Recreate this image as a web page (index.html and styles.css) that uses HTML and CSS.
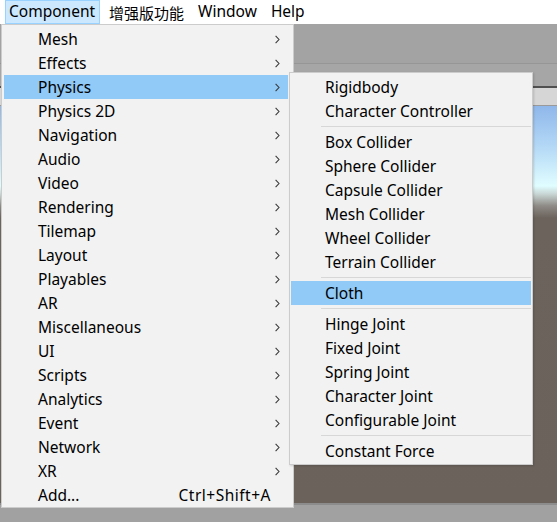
FILE: index.html
```html
<!DOCTYPE html>
<html>
<head>
<meta charset="utf-8">
<link rel="stylesheet" href="styles.css">
</head>
<body>
<div class="menubar">
  <div class="mb-item active">Component</div>
  <div class="mb-item cjk">增强版功能</div>
  <div class="mb-item">Window</div>
  <div class="mb-item">Help</div>
</div>
<div class="workspace">
  <div class="band-top"></div>
  <div class="band-mid"></div>
  <div class="scene-toolbar"></div>
  <div class="scene"></div>
  <div class="band-bottom"></div>

  <div class="menu main-menu">
    <div class="row"><span class="label">Mesh</span><svg class="chev" viewBox="0 0 5 9"><polyline points="0.6,0.8 4,4.5 0.6,8.2"/></svg></div>
    <div class="row"><span class="label">Effects</span><svg class="chev" viewBox="0 0 5 9"><polyline points="0.6,0.8 4,4.5 0.6,8.2"/></svg></div>
    <div class="row hl"><span class="label">Physics</span><svg class="chev" viewBox="0 0 5 9"><polyline points="0.6,0.8 4,4.5 0.6,8.2"/></svg></div>
    <div class="row"><span class="label">Physics 2D</span><svg class="chev" viewBox="0 0 5 9"><polyline points="0.6,0.8 4,4.5 0.6,8.2"/></svg></div>
    <div class="row"><span class="label">Navigation</span><svg class="chev" viewBox="0 0 5 9"><polyline points="0.6,0.8 4,4.5 0.6,8.2"/></svg></div>
    <div class="row"><span class="label">Audio</span><svg class="chev" viewBox="0 0 5 9"><polyline points="0.6,0.8 4,4.5 0.6,8.2"/></svg></div>
    <div class="row"><span class="label">Video</span><svg class="chev" viewBox="0 0 5 9"><polyline points="0.6,0.8 4,4.5 0.6,8.2"/></svg></div>
    <div class="row"><span class="label">Rendering</span><svg class="chev" viewBox="0 0 5 9"><polyline points="0.6,0.8 4,4.5 0.6,8.2"/></svg></div>
    <div class="row"><span class="label">Tilemap</span><svg class="chev" viewBox="0 0 5 9"><polyline points="0.6,0.8 4,4.5 0.6,8.2"/></svg></div>
    <div class="row"><span class="label">Layout</span><svg class="chev" viewBox="0 0 5 9"><polyline points="0.6,0.8 4,4.5 0.6,8.2"/></svg></div>
    <div class="row"><span class="label">Playables</span><svg class="chev" viewBox="0 0 5 9"><polyline points="0.6,0.8 4,4.5 0.6,8.2"/></svg></div>
    <div class="row"><span class="label">AR</span><svg class="chev" viewBox="0 0 5 9"><polyline points="0.6,0.8 4,4.5 0.6,8.2"/></svg></div>
    <div class="row"><span class="label">Miscellaneous</span><svg class="chev" viewBox="0 0 5 9"><polyline points="0.6,0.8 4,4.5 0.6,8.2"/></svg></div>
    <div class="row"><span class="label">UI</span><svg class="chev" viewBox="0 0 5 9"><polyline points="0.6,0.8 4,4.5 0.6,8.2"/></svg></div>
    <div class="row"><span class="label">Scripts</span><svg class="chev" viewBox="0 0 5 9"><polyline points="0.6,0.8 4,4.5 0.6,8.2"/></svg></div>
    <div class="row"><span class="label">Analytics</span><svg class="chev" viewBox="0 0 5 9"><polyline points="0.6,0.8 4,4.5 0.6,8.2"/></svg></div>
    <div class="row"><span class="label">Event</span><svg class="chev" viewBox="0 0 5 9"><polyline points="0.6,0.8 4,4.5 0.6,8.2"/></svg></div>
    <div class="row"><span class="label">Network</span><svg class="chev" viewBox="0 0 5 9"><polyline points="0.6,0.8 4,4.5 0.6,8.2"/></svg></div>
    <div class="row"><span class="label">XR</span><svg class="chev" viewBox="0 0 5 9"><polyline points="0.6,0.8 4,4.5 0.6,8.2"/></svg></div>
    <div class="row"><span class="label">Add...</span><span class="shortcut">Ctrl+Shift+A</span></div>
  </div>

  <div class="menu sub-menu">
    <div class="row"><span class="label">Rigidbody</span></div>
    <div class="row"><span class="label">Character Controller</span></div>
    <div class="sep"></div>
    <div class="row"><span class="label">Box Collider</span></div>
    <div class="row"><span class="label">Sphere Collider</span></div>
    <div class="row"><span class="label">Capsule Collider</span></div>
    <div class="row"><span class="label">Mesh Collider</span></div>
    <div class="row"><span class="label">Wheel Collider</span></div>
    <div class="row"><span class="label">Terrain Collider</span></div>
    <div class="sep"></div>
    <div class="row hl"><span class="label">Cloth</span></div>
    <div class="sep"></div>
    <div class="row"><span class="label">Hinge Joint</span></div>
    <div class="row"><span class="label">Fixed Joint</span></div>
    <div class="row"><span class="label">Spring Joint</span></div>
    <div class="row"><span class="label">Character Joint</span></div>
    <div class="row"><span class="label">Configurable Joint</span></div>
    <div class="sep"></div>
    <div class="row"><span class="label">Constant Force</span></div>
  </div>
</div>
</body>
</html>
```
FILE: styles.css
```css
html, body {
  margin: 0;
  padding: 0;
}
body {
  width: 557px;
  height: 522px;
  overflow: hidden;
  font-family: "Noto Sans", "Noto Sans CJK SC", sans-serif;
  font-size: 15.5px;
  color: #000;
  background: #a3a3a3;
}
.menubar {
  height: 24px;
  background: #fff;
  display: flex;
  align-items: stretch;
  padding-left: 5px;
  box-sizing: border-box;
}
.mb-item {
  display: flex;
  align-items: center;
  padding: 0 4px 0 3px;
  margin-right: 5px;
  border: 1px solid transparent;
  line-height: 1;
}
.mb-item.active {
  background: #cce8ff;
  border-color: #99d1ff;
}
.mb-item.cjk {
  font-family: "Noto Sans CJK SC", sans-serif;
  font-size: 15px;
}
.workspace {
  position: relative;
  height: 498px;
  display: flex;
  flex-direction: column;
}
.band-top {
  height: 39px;
  background: #a3a3a3;
  border-bottom: 1px solid #969696;
}
.band-mid {
  height: 22px;
  background: #a6a6a6;
  border-bottom: 2px solid #505050;
}
.scene-toolbar {
  height: 17px;
  background: #d6d6d6;
  border-bottom: 1px solid #9a9a9a;
}
.scene {
  flex: 1;
  background: linear-gradient(to bottom,
    #8fb7ea 0px,
    #b3d8f6 40px,
    #e0fdff 80px,
    #c8d6d4 88px,
    #8e8a85 100px,
    #6b635c 112px,
    #6a625b 100%);
}
.band-bottom {
  height: 17px;
  background: #a1a1a1;
  border-top: 2px solid #8c8c8c;
}
.menu {
  position: absolute;
  background: #f2f2f2;
  border: 1px solid #cccccc;
  box-sizing: border-box;
}
.main-menu {
  left: 1px;
  top: 0;
  width: 293px;
  padding: 2px 5px 0 2px;
}
.sub-menu {
  left: 289px;
  top: 48px;
  width: 244px;
  padding: 2px 1px 1px 1px;
  box-shadow: 1px 1px 2px rgba(0,0,0,0.15);
}
.row {
  height: 24px;
  display: flex;
  align-items: center;
  padding-left: 34px;
  padding-right: 8px;
  white-space: nowrap;
}
.row.hl {
  background: #91c9f7;
}
.label {
  flex: 1;
}
.shortcut {
  padding-right: 9px;
  letter-spacing: 0.5px;
}
.chev {
  width: 5px;
  height: 9px;
  fill: none;
  stroke: #3a3a3a;
  stroke-width: 1.1;
}
.sep {
  height: 7px;
  display: flex;
  align-items: center;
  padding-left: 30px;
}
.sep::after {
  content: "";
  flex: 1;
  height: 1px;
  background: #d7d7d7;
}
```
